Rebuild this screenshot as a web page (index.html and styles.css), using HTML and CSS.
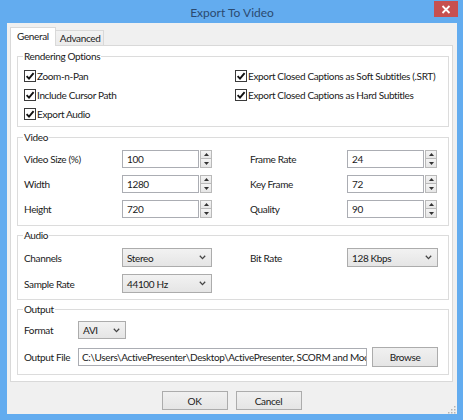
FILE: index.html
```html
<!DOCTYPE html>
<html>
<head>
<meta charset="utf-8">
<link rel="stylesheet" href="styles.css">
</head>
<body>
<div class="window">
  <div class="titlebar">
    <div class="title">Export To Video</div>
    <div class="close"><svg width="10" height="9" viewBox="0 0 10 9"><path d="M1.5 1 L8.5 8 M8.5 1 L1.5 8" stroke="#fff" stroke-width="1.8" fill="none"/></svg></div>
  </div>
  <div class="client">
    <div class="tabs">
      <div class="tab active">General</div>
      <div class="tab">Advanced</div>
    </div>
    <div class="panel">
      <fieldset class="group ro">
        <legend>Rendering Options</legend>
        <div class="checks">
          <div class="check"><span class="box"><svg width="10" height="10" viewBox="0 0 10 10"><path d="M1.6 5.2 L4 7.6 L8.6 2.2" stroke="#111" stroke-width="1.9" fill="none"/></svg></span>Zoom-n-Pan</div>
          <div class="check"><span class="box"><svg width="10" height="10" viewBox="0 0 10 10"><path d="M1.6 5.2 L4 7.6 L8.6 2.2" stroke="#111" stroke-width="1.9" fill="none"/></svg></span>Export Closed Captions as Soft Subtitles (.SRT)</div>
          <div class="check"><span class="box"><svg width="10" height="10" viewBox="0 0 10 10"><path d="M1.6 5.2 L4 7.6 L8.6 2.2" stroke="#111" stroke-width="1.9" fill="none"/></svg></span>Include Cursor Path</div>
          <div class="check"><span class="box"><svg width="10" height="10" viewBox="0 0 10 10"><path d="M1.6 5.2 L4 7.6 L8.6 2.2" stroke="#111" stroke-width="1.9" fill="none"/></svg></span>Export Closed Captions as Hard Subtitles</div>
          <div class="check"><span class="box"><svg width="10" height="10" viewBox="0 0 10 10"><path d="M1.6 5.2 L4 7.6 L8.6 2.2" stroke="#111" stroke-width="1.9" fill="none"/></svg></span>Export Audio</div>
        </div>
      </fieldset>

      <fieldset class="group video">
        <legend>Video</legend>
        <div class="grid vgrid">
          <div class="lbl">Video Size (%)</div>
          <div class="spinfield"><div class="input">100</div><div class="spin"><div class="sb"><svg width="5" height="3" viewBox="0 0 5 3"><path d="M0 3 L2.5 0 L5 3 Z" fill="#333"/></svg></div><div class="sb"><svg width="5" height="3" viewBox="0 0 5 3"><path d="M0 0 L2.5 3 L5 0 Z" fill="#333"/></svg></div></div></div>
          <div class="lbl">Frame Rate</div>
          <div class="spinfield"><div class="input">24</div><div class="spin"><div class="sb"><svg width="5" height="3" viewBox="0 0 5 3"><path d="M0 3 L2.5 0 L5 3 Z" fill="#333"/></svg></div><div class="sb"><svg width="5" height="3" viewBox="0 0 5 3"><path d="M0 0 L2.5 3 L5 0 Z" fill="#333"/></svg></div></div></div>

          <div class="lbl">Width</div>
          <div class="spinfield"><div class="input">1280</div><div class="spin"><div class="sb"><svg width="5" height="3" viewBox="0 0 5 3"><path d="M0 3 L2.5 0 L5 3 Z" fill="#333"/></svg></div><div class="sb"><svg width="5" height="3" viewBox="0 0 5 3"><path d="M0 0 L2.5 3 L5 0 Z" fill="#333"/></svg></div></div></div>
          <div class="lbl">Key Frame</div>
          <div class="spinfield"><div class="input">72</div><div class="spin"><div class="sb"><svg width="5" height="3" viewBox="0 0 5 3"><path d="M0 3 L2.5 0 L5 3 Z" fill="#333"/></svg></div><div class="sb"><svg width="5" height="3" viewBox="0 0 5 3"><path d="M0 0 L2.5 3 L5 0 Z" fill="#333"/></svg></div></div></div>

          <div class="lbl">Height</div>
          <div class="spinfield"><div class="input">720</div><div class="spin"><div class="sb"><svg width="5" height="3" viewBox="0 0 5 3"><path d="M0 3 L2.5 0 L5 3 Z" fill="#333"/></svg></div><div class="sb"><svg width="5" height="3" viewBox="0 0 5 3"><path d="M0 0 L2.5 3 L5 0 Z" fill="#333"/></svg></div></div></div>
          <div class="lbl">Quality</div>
          <div class="spinfield"><div class="input">90</div><div class="spin"><div class="sb"><svg width="5" height="3" viewBox="0 0 5 3"><path d="M0 3 L2.5 0 L5 3 Z" fill="#333"/></svg></div><div class="sb"><svg width="5" height="3" viewBox="0 0 5 3"><path d="M0 0 L2.5 3 L5 0 Z" fill="#333"/></svg></div></div></div>
        </div>
      </fieldset>

      <fieldset class="group audio">
        <legend>Audio</legend>
        <div class="grid agrid">
          <div class="lbl">Channels</div>
          <div class="select w90"><span>Stereo</span><svg width="7" height="5" viewBox="0 0 7 5"><path d="M0.8 0.8 L3.5 3.6 L6.2 0.8" stroke="#444" stroke-width="1.3" fill="none"/></svg></div>
          <div class="lbl">Bit Rate</div>
          <div class="select w91"><span>128 Kbps</span><svg width="7" height="5" viewBox="0 0 7 5"><path d="M0.8 0.8 L3.5 3.6 L6.2 0.8" stroke="#444" stroke-width="1.3" fill="none"/></svg></div>

          <div class="lbl">Sample Rate</div>
          <div class="select w90"><span>44100 Hz</span><svg width="7" height="5" viewBox="0 0 7 5"><path d="M0.8 0.8 L3.5 3.6 L6.2 0.8" stroke="#444" stroke-width="1.3" fill="none"/></svg></div>
        </div>
      </fieldset>

      <fieldset class="group output">
        <legend>Output</legend>
        <div class="orow first">
          <div class="olbl">Format</div>
          <div class="select w48"><span>AVI</span><svg width="7" height="5" viewBox="0 0 7 5"><path d="M0.8 0.8 L3.5 3.6 L6.2 0.8" stroke="#444" stroke-width="1.3" fill="none"/></svg></div>
        </div>
        <div class="orow second">
          <div class="olbl">Output File</div>
          <div class="input path">C:\Users\ActivePresenter\Desktop\ActivePresenter, SCORM and Moodle</div>
          <div class="btn browse">Browse</div>
        </div>
      </fieldset>
    </div>
    <div class="actions">
      <div class="btn">OK</div>
      <div class="btn">Cancel</div>
    </div>
    <div class="grip"><svg width="9" height="9" viewBox="0 0 9 9"><g fill="#b4b4b4"><rect x="7" y="1" width="1.5" height="1.5"/><rect x="4" y="4" width="1.5" height="1.5"/><rect x="7" y="4" width="1.5" height="1.5"/><rect x="1" y="7" width="1.5" height="1.5"/><rect x="4" y="7" width="1.5" height="1.5"/><rect x="7" y="7" width="1.5" height="1.5"/></g></svg></div>
  </div>
</div>
</body>
</html>
```

FILE: styles.css
```css
* { box-sizing: border-box; }
html, body { margin: 0; padding: 0; }
body {
  width: 463px;
  height: 420px;
  overflow: hidden;
  font-family: "Lato", "Liberation Sans", sans-serif;
  font-size: 10px;
  letter-spacing: -0.35px;
  color: #1a1a1a;
}
.window {
  width: 463px;
  height: 420px;
  background: #63acef;
  display: flex;
  flex-direction: column;
}
.titlebar {
  position: relative;
  height: 23px;
  flex: none;
  display: flex;
  align-items: center;
  justify-content: center;
}
.title {
  font-size: 12px;
  letter-spacing: 0;
  color: #2b4a6f;
  padding-top: 2px;
  padding-left: 1px;
}
.close {
  position: absolute;
  top: 1px;
  right: 5px;
  width: 24px;
  height: 16px;
  background: #c75050;
  display: flex;
  align-items: center;
  justify-content: center;
}
.client {
  position: relative;
  flex: none;
  margin-left: 7px;
  width: 450px;
  height: 391px;
  background: #f0f0f0;
  display: flex;
  flex-direction: column;
}
.tabs {
  display: flex;
  align-items: flex-end;
  height: 22px;
  padding-left: 3px;
  flex: none;
}
.tab {
  border: 1px solid #d9d9d9;
  border-bottom: none;
  height: 15px;
  line-height: 14px;
  padding: 0 3px 0 4px;
  background: linear-gradient(#f2f2f2, #ebebeb);
  color: #1a1a1a;
}
.tab.active {
  height: 19px;
  line-height: 16px;
  padding: 0 6px 0 6px;
  background: #fff;
  margin-bottom: -1px;
  position: relative;
  z-index: 1;
}
.tab + .tab { border-left: none; }
.panel {
  flex: none;
  margin-left: 3px;
  width: 443px;
  height: 337px;
  border: 1px solid #d9d9d9;
  background: #fff;
  display: flex;
  flex-direction: column;
}
.group {
  margin: 0 3px 0 6px;
  border: 1px solid #dcdcdc;
  padding: 0 6px;
  min-width: 0;
}
legend {
  padding: 0 1px;
  margin-left: -1px;
  line-height: 15px;
  height: 15px;
  color: #1a1a1a;
}
.ro { margin-top: 3px; padding-top: 2px; padding-bottom: 3px; }
.video { margin-top: 3px; padding-top: 5px; padding-bottom: 7px; }
.audio { margin-top: 2px; padding-top: 5px; padding-bottom: 6px; }
.output { margin-top: 2px; padding-top: 4px; padding-bottom: 7px; }

.checks {
  display: grid;
  grid-template-columns: 211px auto;
  grid-auto-rows: 19px;
}
.check {
  display: flex;
  align-items: center;
  white-space: nowrap;
}
.box {
  width: 12px;
  height: 12px;
  border: 1px solid #3a3a3a;
  background: #fff;
  margin-right: 1px;
  display: flex;
  align-items: center;
  justify-content: center;
  flex: none;
}
.grid {
  display: grid;
  row-gap: 7px;
  align-items: center;
}
.vgrid {
  grid-template-columns: 98px 128px 97px 90px;
  grid-auto-rows: 18px;
}
.agrid {
  grid-template-columns: 98px 128px 97px 91px;
  grid-auto-rows: 19px;
}
.lbl { white-space: nowrap; }
.spinfield {
  display: flex;
  height: 18px;
}
.input {
  height: 18px;
  width: 77px;
  border: 1px solid #abadb3;
  background: #fff;
  padding-left: 4px;
  line-height: 16px;
  white-space: nowrap;
  overflow: hidden;
}
.spin {
  margin-left: 1px;
  width: 12px;
  display: flex;
  flex-direction: column;
}
.sb {
  height: 9px;
  border: 1px solid #b9b9b9;
  background: linear-gradient(#f4f4f4, #e6e6e6);
  display: flex;
  align-items: center;
  justify-content: center;
}
.sb + .sb { border-top: none; }
.select {
  height: 19px;
  border: 1px solid #acacac;
  background: linear-gradient(#f2f2f2, #e5e5e5);
  display: flex;
  align-items: center;
  justify-content: space-between;
  padding: 0 5px 0 4px;
  white-space: nowrap;
}
.w90 { width: 90px; }
.w91 { width: 91px; }
.w48 { width: 48px; height: 18px; }
.orow {
  display: flex;
  align-items: center;
}
.orow.second { margin-top: 8px; height: 20px; }
.olbl { width: 54px; white-space: nowrap; }
.input.path {
  width: 289px;
  padding-left: 3px;
}
.btn {
  height: 19px;
  width: 66px;
  border: 1px solid #acacac;
  background: linear-gradient(#f0f0f0, #e5e5e5);
  display: flex;
  align-items: center;
  justify-content: center;
  color: #1a1a1a;
}
.btn.browse {
  margin-left: 5px;
  height: 20px;
}
.actions {
  margin-top: 9px;
  display: flex;
  justify-content: center;
  gap: 8px;
  padding-right: 1px;
}
.grip {
  position: absolute;
  right: 1px;
  bottom: 1px;
  width: 9px;
  height: 9px;
}
```
